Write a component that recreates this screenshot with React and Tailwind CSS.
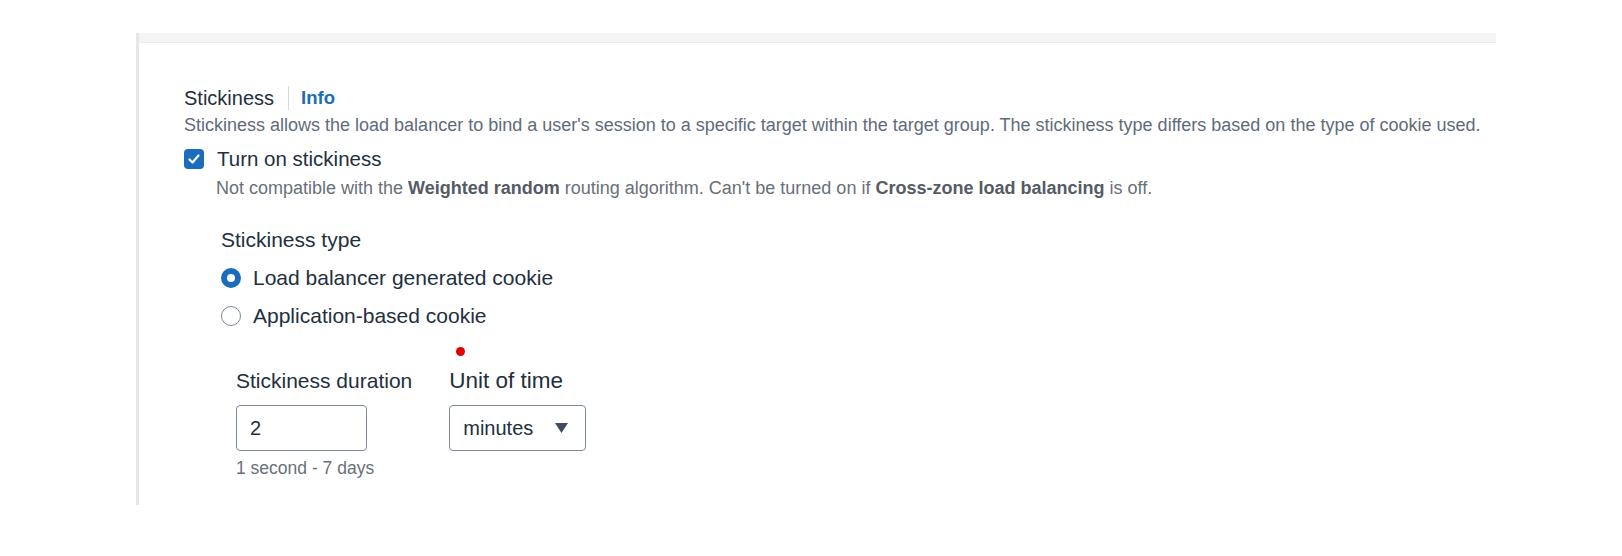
import React from 'react'

function Radio({ checked, label }) {
  return (
    <label className="flex items-center gap-[12px] h-[38px]">
      {checked ? (
        <span className="w-[20px] h-[20px] rounded-full border-[6px] border-[#1c6cbd] bg-white" />
      ) : (
        <span className="w-[20px] h-[20px] rounded-full border-[1.5px] border-[#7d8998] bg-white" />
      )}
      <span className="text-[21px] text-[#232f3e]">{label}</span>
    </label>
  )
}

export default function App() {
  return (
    <div
      className="w-[1622px] h-[556px] bg-white relative"
      style={{ fontFamily: '"Liberation Sans", Arial, sans-serif' }}
    >
      <div className="pl-[136px] pt-[33px]">
        <div className="border-l-[3px] border-[#e6e6e6] w-[1360px] h-[472px]">
          {/* top strip */}
          <div className="h-[10px] bg-[#f5f5f5] border-b border-[#ebebeb]" />

          <div className="pl-[45px] pt-[40px]">
            {/* header */}
            <div className="flex items-center h-[30px]">
              <span className="text-[20px] text-[#232f3e]">Stickiness</span>
              <span className="w-px h-[24px] bg-[#d5dbdb] ml-[14px] mr-[12px]" />
              <span className="text-[18.5px] font-bold text-[#1b6fb5]">Info</span>
            </div>
            <p className="text-[18px] text-[#5f6b7a] leading-[24px] whitespace-nowrap">
              Stickiness allows the load balancer to bind a user's session to a specific target within the target group. The stickiness type differs based on the type of cookie used.
            </p>

            {/* checkbox */}
            <div className="flex items-center gap-[13px] mt-[9px] h-[26px]">
              <span className="w-[20px] h-[20px] rounded-[4px] bg-[#1c6cbd] flex items-center justify-center">
                <svg width="14" height="14" viewBox="0 0 14 14" fill="none">
                  <path d="M2.5 7.5l3 3 6-7" stroke="white" strokeWidth="2.2" strokeLinecap="round" strokeLinejoin="round" />
                </svg>
              </span>
              <span className="text-[20.5px] text-[#232f3e]">Turn on stickiness</span>
            </div>
            <p className="text-[18px] text-[#687078] ml-[32px] mt-[4px] leading-[24px] whitespace-nowrap">
              Not compatible with the <b className="text-[#545b64]">Weighted random</b> routing algorithm. Can't be turned on if{' '}
              <b className="text-[#545b64]">Cross-zone load balancing</b> is off.
            </p>

            {/* stickiness type */}
            <div className="ml-[37px] mt-[26px]">
              <div className="text-[21px] text-[#232f3e] leading-[28px]">Stickiness type</div>
              <div className="mt-[5px]">
                <Radio checked label="Load balancer generated cookie" />
                <Radio label="Application-based cookie" />
              </div>

              {/* duration */}
              <div className="flex gap-[37px] ml-[15px] mt-[32px]">
                <div>
                  <div className="text-[21px] text-[#232f3e] leading-[28px]">Stickiness duration</div>
                  <div className="mt-[10px] w-[131px] h-[46px] border border-[#7d8998] rounded-[4px] flex items-center px-[13px] text-[20px] text-[#232f3e]">
                    2
                  </div>
                  <div className="text-[17.5px] text-[#687078] mt-[4px]">1 second - 7 days</div>
                </div>
                <div>
                  <div className="text-[22.5px] text-[#232f3e] leading-[28px] whitespace-nowrap">Unit of time</div>
                  <div className="mt-[10px] w-[137px] h-[46px] border border-[#7d8998] rounded-[4px] flex items-center justify-between pl-[13px] pr-[16px] text-[20px] text-[#232f3e]">
                    <span>minutes</span>
                    <svg width="15" height="12" viewBox="0 0 15 12">
                      <path d="M1 1h13L7.5 11z" fill="#414d5c" />
                    </svg>
                  </div>
                </div>
              </div>
            </div>
          </div>
        </div>
      </div>

      {/* cursor marker */}
      <span className="absolute left-[456px] top-[347px] w-[9px] h-[9px] rounded-full bg-[#e00000]" />
    </div>
  )
}
